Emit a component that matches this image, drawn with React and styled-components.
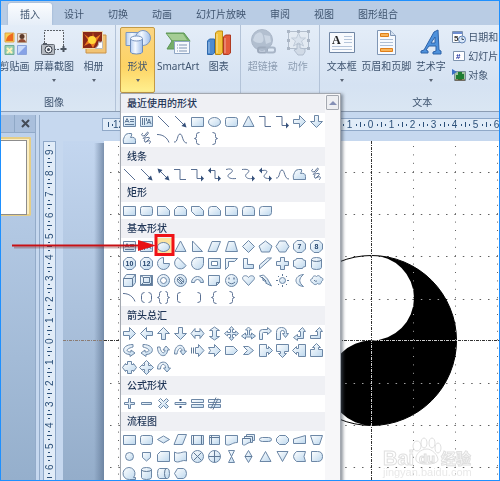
import styled, { createGlobalStyle, css } from "styled-components";

const GlobalStyle = createGlobalStyle`
	* {
		box-sizing: border-box;
	}

	body {
		margin: 0;
		font-family: "Noto Sans", "Noto Sans CJK SC", sans-serif;
		font-size: 10px;
		color: #3f546f;
	}

	button {
		margin: 0;
		padding: 0;
		border: 0;
		background: none;
		font: inherit;
		color: inherit;
	}

	svg {
		display: block;
	}
`;

const Window = styled.div`
	position: relative;
	display: flex;
	flex-direction: column;
	height: 100vh;
	overflow: hidden;
	border: 1px solid #1e90ff;
	background: #c6d8ef;
`;

const Tabs = styled.nav`
	display: flex;
	flex: none;
	height: 24px;
	padding: 2px 7px 0;
	background: #b9cce4;
`;

const Tab = styled.button`
	flex: none;
	padding: 0 12px;
	line-height: 22px;
	white-space: nowrap;

	${({ $active }) =>
		$active &&
		css`
			border-radius: 3px 3px 0 0;
			background: linear-gradient(#fafcfe, #e6eef8);
			box-shadow: 0 0 2px #8fa8c8;
			clip-path: inset(-2px -2px 0 -2px);
		`}
`;

const Ribbon = styled.div`
	display: flex;
	flex: none;
	height: 87px;
	border-bottom: 1px solid #8b9cb3;
	background: linear-gradient(#e4edf8, #d5e2f2 70%, #dae6f3);
`;

const Group = styled.section`
	display: flex;
	flex: none;
	flex-direction: column;
	padding: 2px 4px 0;
	border-right: 1px solid #b3c3d8;

	&:first-child {
		margin-left: -4px;
		padding-left: 0;
	}
`;

const GroupButtons = styled.div`
	display: flex;
	height: 66px;
`;

const GroupTitle = styled.div`
	line-height: 18px;
	text-align: center;
`;

const BigButton = styled.button`
	display: flex;
	flex-direction: column;
	align-items: center;
	min-width: 35px;
	height: 66px;
	padding: 2px 2px 0;
	line-height: 20px;
	white-space: nowrap;
	opacity: ${({ disabled }) => (disabled ? 0.5 : 1)};

	${({ $open }) =>
		$open &&
		css`
			padding: 1px 1px 0;
			border: 1px solid #c39a45;
			border-radius: 2px;
			background: linear-gradient(#fbd583, #fdd364 60%, #fff08f);
		`}
`;

const Caret = styled.span`
	margin-top: 3px;
	border: 2px solid transparent;
	border-top: 3px solid #5a6474;
	border-bottom: 0;
`;

const SmallButtons = styled.div`
	display: flex;
	flex-direction: column;
	width: 72px;
	padding-left: 4px;
`;

const SmallButton = styled.button`
	display: flex;
	align-items: center;
	gap: 2px;
	height: 19px;
	white-space: nowrap;
`;

const Dropdown = styled.div`
	position: relative;
`;

const Menu = styled.div`
	position: absolute;
	z-index: 2;
	top: 100%;
	left: 0;
	display: flex;
	border: 1px solid #a3a8b0;
	background: #fff;
	box-shadow: 2px 1px 3px rgba(70, 80, 95, 0.6);
`;

const MenuTitle = styled.h3`
	margin: 0;
	padding-left: 6px;
	background: #eff0f4;
	color: #1f3556;
	font-size: 10px;
	font-weight: 500;
	line-height: 19px;
`;

const ShapeGrid = styled.div`
	display: grid;
	grid-template-columns: repeat(12, 17px);
	grid-auto-rows: 17px;
`;

const ShapeButton = styled.button`
	background: ${({ $selected }) => ($selected ? "#fbe3a0" : "none")};
`;

const MenuScroll = styled.div`
	width: 15px;
	padding: 1px;
	background: #f7f7f9;
`;

const ScrollUp = styled.button`
	display: flex;
	align-items: center;
	justify-content: center;
	width: 13px;
	height: 15px;
	border: 1px solid #a4a8b0;
	border-radius: 1px;
	background: #eeeff2;

	&::before {
		content: "";
		border: 4px solid transparent;
		border-top: 0;
		border-bottom: 4px solid #8590b5;
	}
`;

const Workspace = styled.main`
	display: flex;
	flex: 1;
	min-height: 0;
	padding-top: 3px;
`;

const SlidesPane = styled.aside`
	flex: none;
	width: 35px;
	border-right: 1px solid #93abc9;
	background: linear-gradient(#bfd3ed, #95afcc);
`;

const PaneHeader = styled.div`
	display: flex;
	height: 18px;
	border-bottom: 1px solid #90a9c8;
	background: #a9bfdc;
`;

const PaneTab = styled.span`
	width: 14px;
	border-right: 1px solid #8fa8c6;
`;

const CloseButton = styled.button`
	display: flex;
	flex: 1;
	align-items: center;
	justify-content: center;
`;

const Thumbnail = styled.div`
	width: 30px;
	height: 79px;
	margin-top: 4px;
	padding: 1px 2px 1px 0;
	border: 2px solid #e6ce86;
	border-left: 0;
	border-radius: 0 2px 2px 0;
	background: #fbeec4;

	&::before {
		content: "";
		display: block;
		height: 100%;
		border: 1px solid #8d8d8d;
		border-left: 0;
		background: #fff;
	}
`;

const Editor = styled.div`
	display: flex;
	flex: 1;
	flex-direction: column;
	min-width: 0;
	margin-left: 3px;
	border-left: 1px solid #93abc9;
`;

const EditorRow = styled.div`
	display: flex;
	flex: ${({ $grow }) => ($grow ? 1 : "none")};
	min-height: 0;
	padding-left: 3px;
`;

const rulerFace = css`
	border: 1px solid #8fa8c8;
	background: #e1ecf8;
	color: #2c5079;
	font-family: "Liberation Sans", sans-serif;
	font-size: 10px;
	overflow: hidden;
`;

const TopRuler = styled.div`
	${rulerFace}
	display: flex;
	flex: 1;
	height: 13px;
	margin: 3px 0 10px 59px;
	padding-left: 5px;
	border-right: 0;
`;

const TopMark = styled.span`
	flex: none;
	width: 21px;
	height: 11px;
	line-height: 11px;
	text-align: center;
	background: linear-gradient(#2c5079, #2c5079) 0 50% / 1px 5px no-repeat,
		linear-gradient(#2c5079, #2c5079) 4px 50% / 1px 2px no-repeat,
		linear-gradient(#2c5079, #2c5079) 17px 50% / 1px 2px no-repeat;
`;

const SideRuler = styled.div`
	${rulerFace}
	flex: none;
	width: 13px;
	border-bottom: 0;
`;

const SideMark = styled.span`
	display: block;
	width: 11px;
	height: 21px;
	line-height: 11px;
	text-align: center;
	writing-mode: vertical-rl;
	transform: rotate(180deg);
	background: linear-gradient(#2c5079, #2c5079) 50% 0 / 5px 1px no-repeat,
		linear-gradient(#2c5079, #2c5079) 50% 4px / 2px 1px no-repeat,
		linear-gradient(#2c5079, #2c5079) 50% 17px / 2px 1px no-repeat;
`;

const Canvas = styled.div`
	flex: 1;
	min-width: 0;
	margin-left: 7px;
	background: linear-gradient(#c3d6ef, #94adca);

	svg {
		width: 100%;
		height: 100%;
	}
`;

const Annotation = styled.svg`
	position: absolute;
	z-index: 3;
	top: 230px;
	left: 8px;
	pointer-events: none;
`;

// Each glyph sits on a 17px cell: d is filled, open is stroke only, solid is dark.
const ROUND = "M4.5 4.5h8q2 0 2 2v5q0 2-2 2h-8q-2 0-2-2v-5q0-2 2-2z";
const OCT = "M6 2.5h5l3.5 3.5v5l-3.5 3.5h-5l-3.5-3.5v-5z";
const CIRCLE = "M2.5 8.5a6 6 0 1 0 12 0a6 6 0 1 0-12 0z";
const SHAPES = {
	textH: { d: "M2.5 3.5h12v10h-12z", open: "M9 6.5h4M9 8.5h4M4 11.5h9M4 9.5l2-4 2 4M5 8.5h2" },
	textV: { d: "M2.5 3.5h12v10h-12z", open: "M4.5 5v7M6.5 5v7M8.5 5v3M9 11l2-5 2 5M10 9.5h2" },
	line: { open: "M3 3l11 11" },
	lineArrow: { open: "M3 3l9 9", solid: "M14.5 14.5l-5-1.500 3.500-3.500z" },
	lineDouble: { open: "M5 5l7 7", solid: "M14.5 14.5l-5-1.500 3.500-3.500zM2.5 2.5l5 1.500-3.500 3.500z" },
	rect: { d: "M2.5 4.5h12v9h-12z" },
	ellipse: { d: "M2.5 9a6 4.5 0 1 0 12 0a6 4.5 0 1 0-12 0z" },
	roundRect: { d: ROUND },
	triangle: { d: "M8.5 3l5.5 10.5h-11z" },
	elbow: { open: "M2 3.5h6v10h6" },
	elbowArrow: { open: "M2 3.5h6v9h4", solid: "M15 12.5l-3-3v6z" },
	elbowDouble: { open: "M5 4.5h4v8h3", solid: "M15 12.5l-3-3v6zM2 4.5l3-3v6z" },
	curved: { open: "M3 3.5c7-2 8 2 4 4s-2 6 6 5" },
	curvedArrow: { open: "M2 3.5c8-1 8 2 5 4s-1 6 5 5", solid: "M15 12.5l-3-3v6z" },
	curvedDouble: { open: "M5 4.5c7-1 5 2 3 4s-1 4 4 4", solid: "M15 12.5l-3-3v6zM2 4.5l3-3v6z" },
	curve: { open: "M2 12c4 1 3-8 6-8s2 9 7 9" },
	freeform: { d: "M3.5 6.5q1-3 4-3h3q1 1-1 4q5-1 5 3v3h-12q-1-4 1-7z" },
	scribble: { open: "M5 3c-4 3 2 4 3 1s4-2 1 1-6 4-2 3 6-1 3 2-3 2 0 1 3 1 1 3M7 9c-2 3 1 4 2 2" },
	arrowR: { d: "M2.5 6.5h6v-4l6 6-6 6v-4h-6z" },
	arrowL: { d: "M14.5 6.5h-6v-4l-6 6 6 6v-4h6z" },
	arrowU: { d: "M6.5 14.5v-6h-4l6-6 6 6h-4v6z" },
	arrowD: { d: "M6.5 2.5v6h-4l6 6 6-6h-4v-6z" },
	arrowLR: { d: "M2 8.5l4-5v3h5v-3l4 5-4 5v-3h-5v3z" },
	arrowUD: { d: "M8.5 2l5 3.5h-3v6h3l-5 3.5-5-3.5h3v-6h-3z" },
	quad: { d: "M8.5 1.5l2.5 3h-1.5v3h3v-1.5l3 2.5-3 2.5v-1.5h-3v3h1.5l-2.5 3-2.5-3h1.5v-3h-3v1.5l-3-2.5 3-2.5v1.5h3v-3h-1.5z" },
	threeWay: { d: "M8.5 2l3 3h-2v5h2v-2l4 3-4 3v-2h-6v2l-4-3 4-3v2h2v-5h-2z" },
	bent: { d: "M2.5 14.5v-7q0-3 3-3h5v-2l4 3.5-4 3.5v-2h-4q-1 0-1 1v6z" },
	uturn: { d: "M2.5 14.5v-7q0-5 5-5t5 5v1h2l-3 4-3-4h2v-1q0-2-2-2t-2 2v7z" },
	leftUp: { d: "M11.5 2.5l3 4h-2v7h-6v2l-4-3 4-3v2h3v-5h-2z" },
	bentUp: { d: "M11.5 2.5l3 4h-2v7h-10v-3h7v-4h-2z" },
	curvR: { d: "M12 2.5c-12 0-12 10-3 10v2l5-3.5-4-3v2c-5 0-6-3 2-5z" },
	curvL: { d: "M5 2.5c12 0 12 10 3 10v2l-5-3.5 4-3v2c5 0 6-3-2-5z" },
	curvU: { d: "M2.5 5c0 11 10 11 10 3h2l-3.5-4-3 4h2c0 4-4 4-5-3z" },
	curvD: { d: "M2.5 12c0-11 10-11 10-3h2l-3.5 4-3-4h2c0-4-4-4-5 3z" },
	striped: { d: "M6.5 5.5h3v-3l5.5 6-5.5 6v-3h-3z", open: "M2.5 5.5v6M4.5 5.5v6" },
	notched: { d: "M2.5 5.5h6v-3l6 6-6 6v-3h-6l2-3z" },
	homePlate: { d: "M2.5 4.5h8l4 4-4 4h-8z" },
	chevron: { d: "M3.5 4.5h5l5 4-5 4h-5l4-4z" },
	calloutR: { d: "M2.5 2.5h7v4h2v-2l4 4-4 4v-2h-2v4h-7z" },
	calloutD: { d: "M2.5 2.5h12v7h-4v2h2l-4 4-4-4h2v-2h-4z" },
	calloutL: { d: "M14.5 2.5h-7v4h-2v-2l-4 4 4 4v-2h2v4h7z" },
	calloutU: { d: "M2.5 14.5h12v-7h-4v-2h2l-4-4-4 4h2v2h-4z" },
	calloutLR: { d: "M6.5 2.5h4v3h2v-1l3 4-3 4v-1h-2v3h-4v-3h-2v1l-3-4 3-4v1h2z" },
	calloutQuad: { d: "M8.5 1.5l3 3h-1v2h2v-1l3 3-3 3v-1h-2v2h1l-3 3-3-3h1v-2h-2v1l-3-3 3-3v1h2v-2h-1z" },
	circular: { d: "M2.5 10c0-9 11-9 11-1h2l-3.5 4-3.5-4h2c0-5-5-5-5 1z" },
	arc: { open: "M2 4.5c6 0 10 3 12 8" },
	braceL: { open: "M10.5 2.5q-3 0-3 2v2q0 2-2 2q2 0 2 2v2q0 2 3 2" },
	braceR: { open: "M6.5 2.5q3 0 3 2v2q0 2 2 2q-2 0-2 2v2q0 2-3 2" },
	snip1: { d: "M2.5 4.5h8l4 4v5h-12z" },
	snip2: { d: "M5.5 4.5h6l3 3v6h-12v-6z" },
	snipDiag: { d: "M2.5 4.5h8l4 4v5h-8l-4-4z" },
	snipRound: { d: "M5.5 4.5h5l4 4v5h-12v-6q0-3 3-3z" },
	round1: { d: "M2.5 4.5h9q3 0 3 3v6h-12z" },
	round2: { d: "M5.5 4.5h6q3 0 3 3v6h-12v-6q0-3 3-3z" },
	roundDiag: { d: "M5.5 4.5h9v6q0 3-3 3h-9v-6q0-3 3-3z" },
	rtTriangle: { d: "M3.5 3v10.5h10z" },
	parallelogram: { d: "M6 3.5h8.5l-4 10h-8.5z" },
	trapezoid: { d: "M5.5 3.5h6l3 10h-12z" },
	diamond: { d: "M8.5 2.5l6 6-6 6-6-6z" },
	pentagon: { d: "M8.5 3l6.5 5-2.5 6h-8l-2.5-6z" },
	hexagon: { d: "M5.5 3h6l3.5 5.5-3.5 5.5h-6l-3.5-5.5z" },
	hepta: { d: OCT, text: "7" },
	octa: { d: OCT, text: "8" },
	deca: { d: OCT, text: "10" },
	dodeca: { d: OCT, text: "12" },
	pie: { d: "M8.5 2.5a6 6 0 1 0 6 6h-6z" },
	chord: { d: "M6 2.5a6 6 0 1 0 8 8z" },
	teardrop: { d: "M14.5 2.5v6a6 6 0 1 1-6-6z" },
	frame: { d: "M2.5 3.5h12v10h-12zM5.5 6.5v4h6v-4z" },
	halfFrame: { d: "M2.5 3.5h12l-3 3h-6v5l-3 3z" },
	ell: { d: "M3.5 3.5h4v6h6v4h-10z" },
	stripe: { d: "M2.5 10l8-7h4l-12 11z" },
	cross: { d: "M6.5 2.5h4v4h4v4h-4v4h-4v-4h-4v-4h4z" },
	plaque: { d: "M5.5 3.5h6q0 2 3 2v6q-3 0-3 2h-6q0-2-3-2v-6q3 0 3-2z" },
	can: { d: "M3.5 4.5q0-2 5-2t5 2v8q0 2-5 2t-5-2z", open: "M3.5 4.5q0 2 5 2t5-2" },
	cube: { d: "M2.5 6.5l3-4h9v8l-3 4h-9z", open: "M2.5 6.5h9v8M11.5 6.5l3-4" },
	bevel: { d: "M2.5 3.5h12v10h-12z", open: "M5.5 5.5h6v5h-6zM2.5 3.5l3 2M14.5 3.5l-3 2M2.5 13.5l3-3M14.5 13.5l-3-3M3.5 12.5h10v-8" },
	donut: { d: `${CIRCLE}M5.5 8.5a3 3 0 1 0 6 0a3 3 0 1 0-6 0z` },
	no: { d: CIRCLE, open: "M5.5 6.5l5 5M6.5 5.5l5 5M5.5 6.5a4 4 0 0 0 5 5M6.5 5.5a4 4 0 0 1 5 5" },
	blockArc: { d: "M2.5 10.5a6 6 0 0 1 12 0h-3a3 3 0 0 0-6 0z" },
	folded: { d: "M2.5 3.5h11v7l-3 3h-8z", open: "M13.5 10.5h-3v3" },
	smiley: { d: CIRCLE, open: "M5 10q3.5 3.5 7 0", solid: "M5.5 5.5h1v2h-1zM10.5 5.5h1v2h-1z" },
	heart: { d: "M8.5 13.5l-5.5-6c-2-4 4-5 5.5-2c1.5-3 7.5-2 5.5 2z" },
	lightning: { d: "M2.5 4l4-1 3 3 1 1 1 2 3 5-6-3 1-1-4-2 1-1z", open: "M5 5l4 4" },
	sun: { d: "M5.5 8.5a3 3 0 1 0 6 0a3 3 0 1 0-6 0z", open: "M8.5 2v2M8.5 13v2M2 8.5h2M13 8.5h2M4 4l1 1M12 12l1 1M4 13l1-1M12 5l1-1" },
	moon: { d: "M12.5 2.5c-10 1-10 11 0 12c-5-4-5-8 0-12z" },
	cloud: { d: "M4.5 10.5c-3-1-2-4 0-4c0-3 3-3 4-2c2-2 4 0 4 1c3 0 3 3 1 4c0 3-3 3-4 2c-2 2-4 1-5-1z", open: "M6 8q1 2 3 1" },
	bracketPair: { open: "M6.5 3.5q-3 0-3 3v4q0 3 3 3M10.5 3.5q3 0 3 3v4q0 3-3 3" },
	bracePair: { open: "M6.5 2.5q-2 0-2 2v2q0 2-2 2q2 0 2 2v2q0 2 2 2M10.5 2.5q2 0 2 2v2q0 2 2 2q-2 0-2 2v2q0 2-2 2" },
	bracketL: { open: "M8.5 3.5q-3 0-3 2v6q0 2 3 2" },
	bracketR: { open: "M8.5 3.5q3 0 3 2v6q0 2-3 2" },
	plus: { d: "M7.5 3.5h2v4h4v2h-4v4h-2v-4h-4v-2h4z" },
	minus: { d: "M3.5 7.5h10v2h-10z" },
	times: { d: "M5.5 3.5l3 3 3-3 2 2-3 3 3 3-2 2-3-3-3 3-2-2 3-3-3-3z" },
	divide: { d: "M3 7.5h11v2h-11z", solid: "M7.5 4h2v2h-2zM7.5 11h2v2h-2z" },
	equal: { d: "M2.5 4.5h12v3h-12zM2.5 9.5h12v3h-12z" },
	notEqual: { d: "M2.5 4.5h12v3h-12zM2.5 9.5h12v3h-12z", open: "M5 13.5l5-11M7 14.5l5-11" },
	decision: { d: "M8.5 5l6 3.5-6 3.5-6-3.5z" },
	predefined: { d: "M2.5 4.5h12v9h-12z", open: "M4.5 4v9M12.5 4v9" },
	internal: { d: "M3.5 4.5h10v9h-10z", open: "M5.5 4v9M3.5 6.5h10" },
	document: { d: "M2.5 4.5h12v7c-6 0-7 4-12 2z" },
	multiDoc: { d: "M6.5 3.5h8v6h-2v2h-2c-4 0-5 4-8 2v-6h2v-2h2z", open: "M2.5 7.5h8v4M4.5 5.5h8v4" },
	terminator: { d: "M5.5 6.5h6q3 0 3 2t-3 2h-6q-3 0-3-2t3-2z" },
	preparation: { d: "M5.5 4.5h6l3 3v3l-3 3h-6l-3-3v-3z" },
	manualInput: { d: "M2.5 8l12-3.5v8h-12z" },
	manualOp: { d: "M2.5 4.5h12l-3 9h-6z" },
	connector: { d: "M4.5 8.5a4 4 0 1 0 8 0a4 4 0 1 0-8 0z" },
	offPage: { d: "M4.5 4.5h8v5l-4 3.5-4-3.5z" },
	card: { d: "M5.5 3.5h9v10h-12v-7z" },
	tape: { d: "M2.5 4c4 3 8-1 12 0v9c-4-2-8 3-12 0z" },
	summing: { d: CIRCLE, open: "M4.5 4.5l8 8M12.5 4.5l-8 8" },
	or: { d: CIRCLE, open: "M8.5 2.5v12M2.5 8.5h12" },
	collate: { d: "M5.5 2.5h6l-6 12h6z" },
	sort: { d: "M8.5 2.5l3.5 6-3.5 6-3.5-6z", open: "M5 8.5h7" },
	extract: { d: "M8.5 3.5l5.5 10h-11z" },
	merge: { d: "M3 3.5h11l-5.5 10z" },
	stored: { d: "M5.5 3.5h9q-3 5 0 10h-9q-6-5 0-10z" },
	delay: { d: "M3.5 3.5h6q5 0 5 5t-5 5h-6z" },
	sequential: { d: "M14.5 14.5h-6a6 6 0 1 1 4-2h2z" },
	disk: { d: "M3.5 4.5q0-2 5-2t5 2v8q0 2-5 2t-5-2z", open: "M3.5 4.5q0 2 5 2t5-2" },
	direct: { d: "M4.5 3.5h8q2 0 2 5t-2 5h-8q-2 0-2-5t2-5z", open: "M11.5 3.5q-2 0-2 5t2 5" },
	display: { d: "M5.5 3.5h6q3 1 3 5t-3 5h-6l-3-5z" },
};

const SECTIONS = [
	{
		title: "最近使用的形状",
		shapes: "textH textV line lineArrow rect ellipse roundRect triangle elbow elbowArrow arrowR arrowD freeform scribble arc curve braceL braceR",
	},
	{
		title: "线条",
		shapes: "line lineArrow lineDouble elbow elbowArrow elbowDouble curved curvedArrow curvedDouble curve freeform scribble",
	},
	{
		title: "矩形",
		shapes: "rect roundRect snip1 snip2 snipDiag snipRound round1 round2 roundDiag",
	},
	{
		title: "基本形状",
		selected: "ellipse",
		shapes:
			"textH textV ellipse triangle rtTriangle parallelogram trapezoid diamond pentagon hexagon hepta octa deca dodeca pie chord teardrop frame halfFrame ell stripe cross plaque can cube bevel donut no blockArc folded smiley heart lightning sun moon cloud arc bracketPair bracePair bracketL bracketR braceL braceR",
	},
	{
		title: "箭头总汇",
		shapes:
			"arrowR arrowL arrowU arrowD arrowLR arrowUD quad threeWay bent uturn leftUp bentUp curvR curvL curvU curvD striped notched homePlate chevron calloutR calloutD calloutL calloutU calloutLR calloutQuad circular",
	},
	{ title: "公式形状", shapes: "plus minus times divide equal notEqual" },
	{
		title: "流程图",
		shapes:
			"rect roundRect decision parallelogram predefined internal document multiDoc terminator preparation manualInput manualOp connector offPage card tape summing or collate sort extract merge stored delay sequential disk direct display",
	},
];

function ShapeIcon({ name }) {
	const { d, open, solid, text } = SHAPES[name];
	return (
		<svg width="17" height="17" stroke="#6c87a6" fill="none">
			{d && <path d={d} fill="url(#shapeFill)" fillRule="evenodd" />}
			{open && <path d={open} stroke={d ? "#5f7997" : "#5a7093"} />}
			{solid && <path d={solid} fill="#35507a" stroke="none" />}
			{text && (
				<text
					x="8.5"
					y="11"
					fill="#24456e"
					stroke="none"
					textAnchor="middle"
					fontSize="7"
					fontWeight="700"
					fontFamily="Liberation Sans, sans-serif"
				>
					{text}
				</text>
			)}
		</svg>
	);
}

function ShapesMenu() {
	return (
		<Menu>
			<div>
				{SECTIONS.map(({ title, shapes, selected }) => (
					<section key={title}>
						<MenuTitle>{title}</MenuTitle>
						<ShapeGrid>
							{shapes.split(" ").map((name) => (
								<ShapeButton key={name} aria-label={name} $selected={name === selected}>
									<ShapeIcon name={name} />
								</ShapeButton>
							))}
						</ShapeGrid>
					</section>
				))}
			</div>
			<MenuScroll>
				<ScrollUp aria-label="scroll up" />
			</MenuScroll>
		</Menu>
	);
}

const ICONS = {
	clipArt: (
		<>
			<path d="M3 4h9v9H3z" fill="#f9cf52" stroke="#e0a548" />
			<path d="M4 12c1-6 4-6 7-8v8z" fill="#ee6a1f" />
			<path d="M15.5 4.5h9v9h-9z" fill="#f0e3d6" stroke="#b59e8a" />
			<circle cx="20" cy="7.5" r="2.500" fill="#5d3b2b" />
			<path d="M16 13c1-4 7-4 8 0z" fill="#944c33" />
			<path d="M3 16.5h9v9H3z" fill="#9ad0b4" stroke="#70ac96" />
			<path d="M5 19l5 5M10 19l-5 5" stroke="#fff3ba" strokeWidth="2" />
			<path d="M15.5 16.5h9v9h-9z" fill="#c9dafa" stroke="#8aa4dc" />
			<path d="M16 25l8-8v8z" fill="#86a2e6" />
		</>
	),
	screenshot: (
		<>
			<path d="M4 2h18v17H4z" fill="#f4f7fb" opacity=".7" />
			<path d="M3.5 14V1.5h19V17M13 20.5h6" fill="none" stroke="#5f6368" strokeDasharray="2 1" />
			<path d="M22.5 17v6M19.5 20h6" stroke="#4c5560" strokeWidth="2" />
			<rect x=".5" y="15.5" width="13" height="10" rx="1" fill="#b6bbc2" stroke="#646b74" />
			<path d="M2 14h4v2H2z" fill="#555c66" />
			<circle cx="7.5" cy="20.5" r="3.5" fill="#f3f5f8" stroke="#333a45" />
			<circle cx="7.5" cy="20.5" r="1.5" fill="#3c4654" />
		</>
	),
	album: (
		<>
			<path d="M5 6h20v18H5z" fill="#f1c475" stroke="#ca9249" />
			<path d="M1.5 2.5h20v17h-20z" fill="#8a2818" stroke="#f0d9a8" />
			<path d="M3 5l8 6 1-8 1 7 7-5-5 8-3 6-3-5-6 3 4-6z" fill="#ee7b20" />
			<circle cx="11" cy="11" r="4" fill="#ffd83b" />
			<path d="M14 19.5q4-2 4-7 0 2 3.5 0v7z" fill="#fff" stroke="#bdbdbd" />
		</>
	),
	shapes: (
		<>
			<path d="M1 3.5h15v13H1z" fill="url(#blueFill)" stroke="#7c97c0" />
			<circle cx="18" cy="9" r="7.5" fill="url(#blueFill)" stroke="#7c97c0" />
			<path d="M5.5 10v13q0 2 6 2t6-2V10z" fill="url(#blueFill)" stroke="#6d8bb8" />
			<ellipse cx="11.5" cy="9.5" rx="6" ry="2.5" fill="#f5f9ff" stroke="#7c97c0" />
		</>
	),
	smartArt: (
		<>
			<path d="M1 4h18l6 8-5 8H2l5-8z" fill="#75ad68" stroke="#5c9655" />
			<path d="M2 5h16l4 6H7z" fill="#a5cd94" />
			<path d="M9.5 12.5h15v12h-15z" fill="#f6f9fd" stroke="#8fa6c4" />
			<path d="M12 16h1M12 19h1M12 22h1M14 16h8M14 19h8M14 22h8" stroke="#7c93b3" />
		</>
	),
	chart: (
		<>
			<path d="M1.5 12l2-2h5v14l-2 1.5h-5z" fill="#4d8bd0" stroke="#2e69ad" />
			<path d="M9.5 4l2-2h5v22l-2 1.5h-5z" fill="#f3c33b" stroke="#be8c13" />
			<path d="M17.5 8l2-2h5v18l-2 1.5h-5z" fill="#e35b3c" stroke="#b03b22" />
			<path d="M3 13v11M11 5v19M19 9v15" stroke="#fff" opacity=".5" />
		</>
	),
	link: (
		<>
			<circle cx="12" cy="11" r="10.5" fill="#8595aa" stroke="#748399" />
			<path d="M5 6q6-6 8 1t-3 7-7-3zM14 6l6 1 1 6-5 2z" fill="#b7c3d2" />
			<rect x="8" y="18.5" width="9" height="5" rx="2" fill="none" stroke="#5f6e84" strokeWidth="2" />
			<rect x="16" y="18.5" width="9" height="5" rx="2" fill="none" stroke="#74849a" strokeWidth="2" />
		</>
	),
	action: (
		<>
			<path d="M3.5 2.5h20v17h-20z" fill="#e7ebf0" stroke="#8592a3" />
			<path d="M13.5 4l2 5h5l-4 3 2 5-5-3-5 3 2-5-4-3h5z" fill="#d4dce5" stroke="#a1adbc" />
			<path d="M2 1h3v3H2zM12 1h3v3h-3zM22 1h3v3h-3zM2 10h3v3H2zM22 10h3v3h-3zM2 18h3v3H2zM22 18h3v3h-3z" fill="#778496" />
			<path d="M12 15h3v4l5 1v3l-2 3h-5l-4-5 3-1z" fill="#c5ced9" stroke="#8492a5" />
		</>
	),
	textBox: (
		<>
			<path d="M.5 3.5h25v20H.5z" fill="#f8fafd" stroke="#7086a4" />
			<path d="M15 7.5h8M15 10.5h8M15 13.5h8M3 17.5h20M3 20.5h20" stroke="#b5c5da" />
			<text x="3" y="15" fontSize="12" fontWeight="700" fontFamily="Liberation Serif, serif" fill="#222">
				A
			</text>
		</>
	),
	headerFooter: (
		<>
			<path d="M4.5 1.5h13l5 5v19h-18z" fill="#f7fafe" stroke="#7f96b5" />
			<path d="M17.5 1.5v5h5" fill="#d5e1f0" stroke="#7f96b5" />
			<path d="M7.5 4.5h8v3h-8zM7.5 19.5h12v3h-12z" fill="#f8b45a" stroke="#e07f19" />
			<path d="M7 10.5h13M7 13.5h13M7 16.5h13" stroke="#aebfd5" />
		</>
	),
	wordArt: (
		<path
			d="M20 1l1 20 2 1v3h-8v-2l3-1v-5h-7l-3 4 2 1v2H3v-2l3-1L16 3zM17 8l-4 6h4z"
			fill="#4d91dc"
			stroke="#2d62a8"
			fillRule="evenodd"
		/>
	),
};

function RibbonButton({ icon, caret, children, ...rest }) {
	return (
		<BigButton {...rest}>
			<svg width="26" height="27">
				{ICONS[icon]}
			</svg>
			<span>{children}</span>
			{caret && <Caret />}
		</BigButton>
	);
}

const DateIcon = () => (
	<svg width="14" height="14">
		<path d="M.5 1.5h10v11H.5z" fill="#fff" stroke="#7d92ad" />
		<path d="M1 2h9v2H1z" fill="#6d8cd0" />
		<text x="2" y="11" fontSize="8" fontWeight="700" fontFamily="Liberation Sans, sans-serif" fill="#333">
			5
		</text>
		<circle cx="10" cy="9.5" r="3.5" fill="#dbe9fa" stroke="#5f82b5" />
		<path d="M10 7.5v2h2" fill="none" stroke="#456" />
	</svg>
);

const NumberIcon = () => (
	<svg width="14" height="14">
		<path d="M1.5 2.5h11v9h-11z" fill="#fff" stroke="#7d92ad" />
		<text x="4" y="10" fontSize="8" fontWeight="700" fontFamily="Liberation Sans, sans-serif" fill="#1c2fa0">
			#
		</text>
	</svg>
);

const ObjectIcon = () => (
	<svg width="14" height="14">
		<path d="M2.5 3.5h11v9h-11z" fill="#a4c2a0" stroke="#788d9a" />
		<path d="M0 1l5 3-5 3z" fill="#3b70c5" />
		<path d="M7 12V5h2v7M5 7v3h6V6" fill="none" stroke="#1f7d32" strokeWidth="2" />
		<path d="M3 12h10" stroke="#6b4b2b" />
	</svg>
);

const TABS = ["插入", "设计", "切换", "动画", "幻灯片放映", "审阅", "视图", "图形组合"];
const TOP_MARKS = [12, 11, 10, 9, 8, 7, 6, 5, 4, 3, 2, 1, 0, 1, 2, 3, 4, 5, 6];
const SIDE_MARKS = [9, 8, 7, 6, 5, 4, 3, 2, 1, 0, 1, 2, 3, 4, 5, 6];
const GRID_X = [55, 97, 139, 182, 224, 266, 350, 392, 434];
const GRID_Y = [31, 73, 115, 158, 242, 284, 326];

function Drawing() {
	return (
		<svg>
			<defs>
				<linearGradient id="slideShade">
					<stop offset="0" stopColor="#5c7391" stopOpacity="0" />
					<stop offset="1" stopColor="#5c7391" stopOpacity=".7" />
				</linearGradient>
			</defs>
			<rect x="31" y="2" width="10" height="100%" fill="url(#slideShade)" />
			<rect x="41" width="100%" height="100%" fill="#fff" />
			<path d="M0 199.5h41" stroke="#8b7b72" strokeDasharray="3 1 1 1" />
			<g transform="translate(308.5 199.5)">
				<circle r="85" fill="#fff" stroke="#000" />
				<path d="M0-85A85 85 0 0 1 0 85A42.5 42.5 0 0 1 0 0A42.5 42.5 0 0 0 0-85z" />
			</g>
			<g stroke="#a0a0a0" style={{ mixBlendMode: "difference" }}>
				{GRID_X.map((x) => (
					<line key={x} x1={x + 0.5} y1="5" x2={x + 0.5} y2="100%" strokeDasharray="1 7.4" />
				))}
				{GRID_Y.map((y) => (
					<line key={y} x1="47" y1={y + 0.5} x2="100%" y2={y + 0.5} strokeDasharray="1.5 6.9" />
				))}
				<line x1="308.5" y1="0" x2="308.5" y2="100%" stroke="#ccc" strokeDasharray="3 1 1 1" />
				<line x1="41" y1="199.5" x2="100%" y2="199.5" stroke="#ccc" strokeDasharray="3 1 1 1" />
			</g>
			<g fill="#fff" stroke="#e0e0e0" fontFamily="Liberation Sans, Noto Sans CJK SC, sans-serif" fontWeight="700">
				<ellipse cx="354" cy="305" rx="4" ry="5" />
				<ellipse cx="361" cy="302" rx="3" ry="5" />
				<ellipse cx="369" cy="302" rx="3" ry="5" />
				<ellipse cx="375" cy="307" rx="3" ry="5" />
				<path d="M364 308c5 0 11 6 11 11s-21 6-22 0 5-11 11-11z" />
				<text x="320" y="324" fontSize="20">
					Bai
				</text>
				<text x="356" y="322" fontSize="13" stroke="#ddd">
					du
				</text>
				<text x="378" y="323" fontSize="15">
					经验
				</text>
				<text x="320" y="335" fontSize="11" fontWeight="400" fill="#e9e9e9" stroke="none">
					jingyan.baidu.com
				</text>
			</g>
		</svg>
	);
}

export default function App() {
	return (
		<Window>
			<GlobalStyle />
			<svg width="0" height="0" style={{ position: "absolute" }}>
				<linearGradient id="shapeFill" x2="1" y2="1">
					<stop offset="0" stopColor="#fff" />
					<stop offset="1" stopColor="#bdd8ee" />
				</linearGradient>
				<linearGradient id="blueFill">
					<stop offset="0" stopColor="#b3cdf3" />
					<stop offset=".4" stopColor="#f4f9ff" />
					<stop offset="1" stopColor="#9dbce9" />
				</linearGradient>
			</svg>
			<Tabs>
				{TABS.map((tab, i) => (
					<Tab key={tab} $active={i === 0}>
						{tab}
					</Tab>
				))}
			</Tabs>
			<Ribbon>
				<Group>
					<GroupButtons>
						<RibbonButton icon="clipArt">剪贴画</RibbonButton>
						<RibbonButton icon="screenshot" caret>
							屏幕截图
						</RibbonButton>
						<RibbonButton icon="album" caret>
							相册
						</RibbonButton>
					</GroupButtons>
					<GroupTitle>图像</GroupTitle>
				</Group>
				<Group>
					<GroupButtons>
						<Dropdown>
							<RibbonButton icon="shapes" caret $open>
								形状
							</RibbonButton>
							<ShapesMenu />
						</Dropdown>
						<RibbonButton icon="smartArt">SmartArt</RibbonButton>
						<RibbonButton icon="chart">图表</RibbonButton>
					</GroupButtons>
				</Group>
				<Group>
					<GroupButtons>
						<RibbonButton icon="link" disabled>
							超链接
						</RibbonButton>
						<RibbonButton icon="action" disabled>
							动作
						</RibbonButton>
					</GroupButtons>
				</Group>
				<Group>
					<GroupButtons>
						<RibbonButton icon="textBox" caret>
							文本框
						</RibbonButton>
						<RibbonButton icon="headerFooter">页眉和页脚</RibbonButton>
						<RibbonButton icon="wordArt" caret>
							艺术字
						</RibbonButton>
						<SmallButtons>
							<SmallButton>
								<DateIcon />
								日期和
							</SmallButton>
							<SmallButton>
								<NumberIcon />
								幻灯片
							</SmallButton>
							<SmallButton>
								<ObjectIcon />
								对象
							</SmallButton>
						</SmallButtons>
					</GroupButtons>
					<GroupTitle>文本</GroupTitle>
				</Group>
			</Ribbon>
			<Workspace>
				<SlidesPane>
					<PaneHeader>
						<PaneTab />
						<CloseButton aria-label="close">
							<svg width="9" height="9" stroke="#444c58" strokeWidth="2">
								<path d="M1 1l7 7M8 1l-7 7" />
							</svg>
						</CloseButton>
					</PaneHeader>
					<Thumbnail />
				</SlidesPane>
				<Editor>
					<EditorRow>
						<TopRuler>
							{TOP_MARKS.map((n, i) => (
								<TopMark key={i}>{n}</TopMark>
							))}
						</TopRuler>
					</EditorRow>
					<EditorRow $grow>
						<SideRuler>
							{SIDE_MARKS.map((n, i) => (
								<SideMark key={i}>{n}</SideMark>
							))}
						</SideRuler>
						<Canvas>
							<Drawing />
						</Canvas>
					</EditorRow>
				</Editor>
			</Workspace>
			<Annotation width="170" height="30">
				<path d="M5 16.5h130" stroke="#7c3030" strokeWidth="2" opacity=".35" />
				<path d="M3 14.5h130" stroke="#c81014" strokeWidth="2" />
				<path d="M129 9l18 5.5-18 5.5z" fill="#e81216" />
				<rect x="147" y="4.5" width="17" height="19" fill="none" stroke="#f01216" strokeWidth="3" />
			</Annotation>
		</Window>
	);
}
